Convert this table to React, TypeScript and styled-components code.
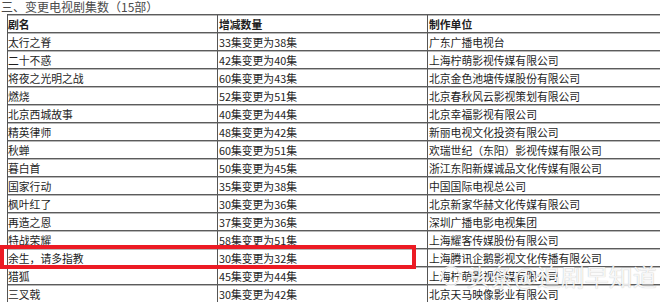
import React from "react";
import styled, { createGlobalStyle } from "styled-components";

const Global = createGlobalStyle`
  html, body { margin: 0; padding: 0; background: #fff; overflow: hidden; }
  body { font-family: "Noto Sans CJK SC", "Noto Sans", sans-serif; }
`;

const Page = styled.div`
  position: relative;
  width: 660px;
  height: 303px;
  overflow: hidden;
  background: #fff;
`;

const Title = styled.div`
  height: 14px;
  padding-left: 1px;
  font-size: 12px;
  line-height: 14px;
  color: #4a4a4a;
  white-space: nowrap;
`;

const Table = styled.div`
  margin-left: 7px;
  width: 720px;
  display: flex;
  flex-direction: column;
  border-left: 1px solid #555;
`;

const Row = styled.div<{ $head?: boolean }>`
  display: grid;
  grid-template-columns: 209px 210px 1fr;
  height: 18px;
  box-sizing: border-box;
  border-top: 1px solid #5c5c5c;
  box-shadow: inset 0 1px 0 #b8b8b8;
  font-weight: ${(p) => (p.$head ? 700 : 400)};
`;

const Cell = styled.div`
  display: flex;
  align-items: center;
  padding-left: 0px;
  font-size: 10.8px;
  line-height: 16px;
  color: #1e1e1e;
  white-space: nowrap;
  & + & {
    border-left: 1px solid #555;
    padding-left: 1px;
  }
`;

const Highlight = styled.div`
  position: absolute;
  left: 0;
  top: 245px;
  width: 416px;
  height: 24px;
  box-sizing: border-box;
  border: 4px solid #ec1b24;
`;

const Watermark = styled.div`
  position: absolute;
  left: 440px;
  top: 262px;
  display: flex;
  align-items: center;
  gap: 4px;
  font-size: 24px;
  line-height: 28px;
  color: rgba(255, 255, 255, 0.88);
  text-shadow: 0 0 1px rgba(0, 0, 0, 0.3);
  white-space: nowrap;
  pointer-events: none;
`;

const rows: [string, string, string][] = [
  ["太行之脊", "33集变更为38集", "广东广播电视台"],
  ["二十不惑", "42集变更为40集", "上海柠萌影视传媒有限公司"],
  ["将夜之光明之战", "60集变更为43集", "北京金色池塘传媒股份有限公司"],
  ["燃烧", "52集变更为51集", "北京春秋风云影视策划有限公司"],
  ["北京西城故事", "40集变更为44集", "北京幸福影视有限公司"],
  ["精英律师", "48集变更为42集", "新丽电视文化投资有限公司"],
  ["秋蝉", "60集变更为51集", "欢瑞世纪（东阳）影视传媒有限公司"],
  ["暮白首", "50集变更为45集", "浙江东阳新媒诚品文化传媒有限公司"],
  ["国家行动", "35集变更为38集", "中国国际电视总公司"],
  ["枫叶红了", "30集变更为36集", "北京新家华赫文化传媒有限公司"],
  ["再造之恩", "37集变更为36集", "深圳广播电影电视集团"],
  ["特战荣耀", "58集变更为51集", "上海耀客传媒股份有限公司"],
  ["余生，请多指教", "30集变更为32集", "上海腾讯企鹅影视文化传播有限公司"],
  ["猎狐", "45集变更为44集", "上海柠萌影视传媒有限公司"],
  ["三叉戟", "30集变更为42集", "北京天马映像影业有限公司"],
];

export default function App() {
  return (
    <Page>
      <Global />
      <Title>三、变更电视剧集数（15部）</Title>
      <Table>
        <Row $head>
          <Cell>剧名</Cell>
          <Cell>增减数量</Cell>
          <Cell>制作单位</Cell>
        </Row>
        {rows.map((r) => (
          <Row key={r[0]}>
            <Cell>{r[0]}</Cell>
            <Cell>{r[1]}</Cell>
            <Cell>{r[2]}</Cell>
          </Row>
        ))}
      </Table>
      <Highlight />
      <Watermark>
        <svg width="22" height="22" viewBox="0 0 22 22">
          <circle cx="11" cy="11" r="9" fill="none" stroke="rgba(255,255,255,0.85)" strokeWidth="2.5" />
          <circle cx="11" cy="11" r="9" fill="none" stroke="rgba(0,0,0,0.15)" strokeWidth="0.6" />
        </svg>
        <span>头条@追剧早知道</span>
      </Watermark>
    </Page>
  );
}
